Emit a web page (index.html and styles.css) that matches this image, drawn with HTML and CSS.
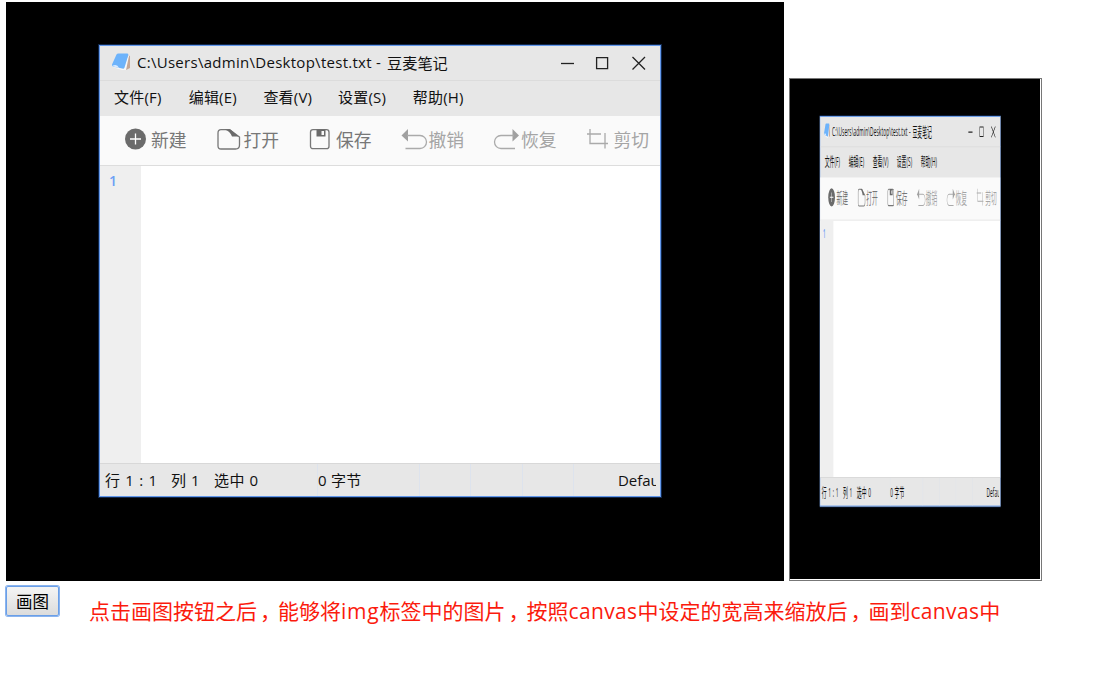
FILE: index.html
```html
<!DOCTYPE html>
<html lang="zh-CN">
<head>
<meta charset="utf-8">
<title>canvas drawImage</title>
<link rel="stylesheet" href="styles.css">
</head>
<body>
<div class="stage">
  <div class="picture" id="picture">
    <div class="window">
      <div class="titlebar">
        <svg class="logo" width="20" height="18" viewBox="0 0 20 18"><path d="M16 2l3 1v12l-4 2z" fill="#c5a898"/><path d="M1 14l12 2 4-14 1 1-3 14-4 0z" fill="#f6f8fb"/><path d="M5.500 1.500Q6 .5 7.500 .5H16.500Q17.500 .5 17.300 2L13.500 14.500Q13 16 11.500 15.500L2 13.500Q.5 13 1 11.500z" fill="#6db3fb"/><path d="M1 13q5-3 7 2z" fill="#dcecff"/></svg>
        <span class="path">C:\Users\admin\Desktop\test.txt - </span><span class="app">豆麦笔记</span>
        <svg class="controls" width="90" height="20" viewBox="0 0 90 20" fill="none" stroke="#222" stroke-width="1.300"><path d="M1 10.500h13"/><path d="M36.600 4.600h11v11h-11z"/><path d="M72.500 4l12.500 12.500M85 4L72.500 16.500"/></svg>
      </div>
      <div class="menubar"><span>文件(F)</span><span>编辑(E)</span><span>查看(V)</span><span>设置(S)</span><span>帮助(H)</span></div>
      <div class="toolbar">
        <span class="tool"><svg width="27" height="24" viewBox="0 0 27 24"><circle cx="11.500" cy="12" r="10.500" fill="#6b6b6b"/><path d="M11.500 6.500v11M6 12h11" stroke="#fff" stroke-width="1.300"/></svg>新建</span>
        <span class="tool"><svg width="27" height="24" viewBox="0 0 27 24"><path d="M4 2.700H12.500L22.500 10v8q0 4-4 4H4Q1 22 1 19V6q0-3.300 3-3.300z" fill="none" stroke="#777" stroke-width="1.300"/><path d="M7.500 2.500h6L21.500 9.500H15Q13 4 7.500 2.500z" fill="#6b6b6b"/></svg>打开</span>
        <span class="tool"><svg width="27" height="24" viewBox="0 0 27 24"><rect x="1.500" y="2.700" width="18.500" height="19" rx="2.500" fill="none" stroke="#777" stroke-width="1.300"/><path d="M7.500 2.500h9v7h-9z" fill="#6b6b6b"/><path d="M12.500 4h2.500v4h-2.500z" fill="#fafafa"/></svg>保存</span>
        <span class="tool off"><svg width="27" height="24" viewBox="0 0 27 24"><path d="M6 2v12.500L-.5 8.500z" fill="#a0a0a0"/><path d="M5 8.500h13a6.500 6.500 0 0 1 0 13H3.500" fill="none" stroke="#aaa" stroke-width="1.300"/></svg>撤销</span>
        <span class="tool off"><svg width="27" height="24" viewBox="0 0 27 24"><path d="M18.500 2v12.500L25 8.500z" fill="#a0a0a0"/><path d="M20 8.500H7a6.500 6.500 0 0 0 0 13h14" fill="none" stroke="#aaa" stroke-width="1.300"/></svg>恢复</span>
        <span class="tool off"><svg width="27" height="24" viewBox="0 0 27 24"><path d="M3 2v14.500h18M0 7h14M18 6v15.500" fill="none" stroke="#aaa" stroke-width="1.300"/></svg>剪切</span>
      </div>
      <div class="editor"><span class="gutter">1</span></div>
      <div class="statusbar"><span class="cell line">行 1 : 1</span><span class="cell col">列 1</span><span class="cell sel">选中 0</span><span class="cell bytes">0 字节</span><span class="cell gap"></span><span class="cell gap"></span><span class="cell gap"></span><span class="cell mode">Defau</span></div>
    </div>
  </div>
  <div class="canvas"><div class="scaled" id="scaled"></div></div>
</div>
<div class="actions">
  <button class="draw" type="button">画图</button>
  <p class="note">点击画图按钮之后<span class="comma">，</span>能够将<span class="img-word">img</span>标签中的图片<span class="comma">，</span>按照<span class="canvas-word">canvas</span>中设定的宽高来缩放后<span class="comma">，</span>画到<span class="canvas-word">canvas</span>中</p>
</div>
<script src="script.js"></script>
</body>
</html>
```
FILE: styles.css
```css
* { box-sizing: border-box; }
body {
  margin: 0;
  padding: 2px 0 0 6px;
  background: #fff;
  font-family: "Open Sans", "Noto Sans CJK SC", sans-serif;
  overflow: hidden;
}
.stage { display: flex; align-items: flex-end; gap: 5px; height: 579px; }
.picture { width: 778px; height: 579px; flex: none; background: #000; padding: 43px 0 0 93px; }
.window {
  display: flex;
  flex-direction: column;
  width: 562px;
  height: 452px;
  border: 1px solid #6398ea;
  box-shadow: 0 0 0 1px #10264a;
  background: #e7e7e7;
  color: #111;
  font-size: 15px;
  white-space: nowrap;
}
.titlebar { display: flex; align-items: center; height: 35px; padding: 0 0 2px 11px; border-bottom: 1px solid #dcdcdc; }
.logo { flex: none; margin-right: 6px; margin-top: -1px; }
.path { width: 250px; white-space: pre; letter-spacing: .28px; }
.app { width: 173px; font-size: 15.200px; }
.controls { flex: none; margin-top: 2px; }
.menubar { display: flex; align-items: center; height: 35px; padding: 0 0 5px 14px; }
.menubar span { width: 74.700px; letter-spacing: .2px; }
.toolbar { display: flex; align-items: center; height: 50px; padding: 0 0 4px 24px; background: #fafafa; border-bottom: 1px solid #ddd; overflow: hidden; }
.tool { display: flex; align-items: center; flex: none; width: 92.500px; font-size: 17.800px; color: #777; }
.tool svg { flex: none; overflow: visible; }
.off { color: #a5a5a5; }
.editor { display: flex; height: 297px; background: #fff; }
.gutter { width: 41px; padding: 5px 0 0 9px; background: #efefef; color: #6d9ff5; font: 600 14px/20px "Open Sans", sans-serif; }
.statusbar { display: flex; align-items: center; flex: 1; border-top: 1px solid #d8d8d8; padding-left: 5px; }
.cell { height: 32px; line-height: 32px; flex: none; }
.line { width: 66px; word-spacing: 1px; letter-spacing: .2px; }
.col { width: 43px; letter-spacing: .5px; }
.sel { width: 103px; letter-spacing: .5px; }
.bytes { width: 102px; border-left: 1px solid #dde3ed; letter-spacing: .3px; }
.gap { width: 51.300px; border-left: 1px solid #dde3ed; }
.mode { width: 83px; padding-left: 44px; border-left: 1px solid #dde3ed; overflow: hidden; }
.canvas { width: 253px; height: 503px; flex: none; border: 1px solid #777; overflow: hidden; }
/* Source picture is 778x579, drawn at 250x500. */
.scaled { width: 250px; height: 500px; }
.scaled .picture { transform: scale(.32134, .86356); transform-origin: 0 0; }
.actions { display: flex; align-items: flex-start; padding-top: 5px; }
.draw {
  width: 53px;
  height: 30px;
  padding: 0;
  border: 1px solid #6a9fe8;
  border-radius: 2px;
  box-shadow: 0 0 0 1px #8bb4ee;
  background: linear-gradient(#f5f5f5, #dcdcdc);
  color: #000;
  font: 16.500px "Noto Sans CJK SC", sans-serif;
}
.note { margin: 8px 0 0 30px; color: #fb1b0d; font-size: 21px; line-height: 34px; white-space: nowrap; }
.comma { padding-left: 3px; letter-spacing: -3px; }
.img-word { letter-spacing: .8px; }
.canvas-word { letter-spacing: .35px; }
```
FILE: script.js
```js
document.getElementById('scaled').appendChild(document.querySelector('#picture').cloneNode(true)).removeAttribute('id');
```
